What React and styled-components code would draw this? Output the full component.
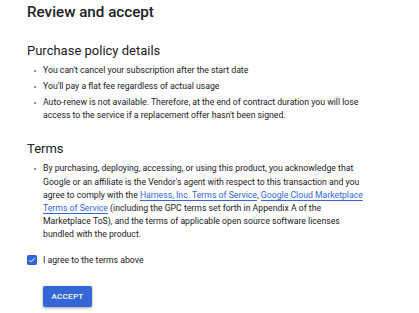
import React from "react";
import styled, { createGlobalStyle } from "styled-components";

const Global = createGlobalStyle`
  html, body { margin: 0; padding: 0; background: #fff; }
  body { font-family: Roboto, "Noto Sans", Arial, sans-serif; color: #202124; }
`;

const Page = styled.div`
  width: 419px;
  height: 313px;
  overflow: hidden;
  box-sizing: border-box;
  padding: 3px 0 0 27px;
`;

const Title = styled.h1`
  margin: 0;
  font-size: 15.2px;
  line-height: 19px;
  font-weight: 500;
`;

const SectionTitle = styled.h2`
  margin: ${(p) => p.$top}px 0 0;
  font-size: 13px;
  line-height: 18px;
  font-weight: 400;
`;

const List = styled.ul`
  margin: ${(p) => p.$top}px 0 0;
  padding: 0 0 0 16px;
  width: 326px;
  font-size: 8.7px;
  line-height: 13.2px;
  list-style: none;
`;

const Item = styled.li`
  position: relative;
  margin-bottom: 2.8px;
  &::before {
    content: "";
    position: absolute;
    left: -9px;
    top: 5.5px;
    width: 2.4px;
    height: 2.4px;
    border-radius: 50%;
    background: #5f6368;
  }
`;

const Link = styled.a`
  color: #3367d6;
  text-decoration: underline;
  text-decoration-thickness: 1px;
  text-underline-offset: 2px;
`;

const CheckRow = styled.label`
  display: flex;
  align-items: center;
  gap: 6px;
  margin-top: 12px;
  font-size: 8.7px;
  line-height: 13px;
`;

const Box = styled.span`
  width: 10px;
  height: 10px;
  border-radius: 1.5px;
  background: #3367d6;
  display: flex;
  align-items: center;
  justify-content: center;
`;

const Button = styled.button`
  margin: 19px 0 0 16px;
  width: 49px;
  height: 21px;
  border: none;
  border-radius: 2px;
  background: #3367d6;
  color: #fff;
  font-family: Roboto, Arial, sans-serif;
  font-size: 8px;
  font-weight: 500;
  letter-spacing: 0.3px;
  padding: 0;
  box-shadow: 0 1px 2px rgba(60, 64, 67, 0.3), 0 1px 3px 1px rgba(60, 64, 67, 0.15);
`;

export default function App() {
  return (
    <Page>
      <Global />
      <Title>Review and accept</Title>
      <SectionTitle $top={20}>Purchase policy details</SectionTitle>
      <List $top={4}>
        <Item>You can't cancel your subscription after the start date</Item>
        <Item>You'll pay a flat fee regardless of actual usage</Item>
        <Item>
          Auto-renew is not available. Therefore, at the end of contract duration you will lose
          access to the service if a replacement offer hasn't been signed.
        </Item>
      </List>
      <SectionTitle $top={18}>Terms</SectionTitle>
      <List $top={4}>
        <Item>
          By purchasing, deploying, accessing, or using this product, you acknowledge that Google
          or an affiliate is the Vendor's agent with respect to this transaction and you agree to
          comply with the <Link href="#">Harness, Inc. Terms of Service</Link>,{" "}
          <Link href="#">Google Cloud Marketplace Terms of Service</Link> (including the GPC terms
          set forth in Appendix A of the Marketplace ToS), and the terms of applicable open source
          software licenses bundled with the product.
        </Item>
      </List>
      <CheckRow>
        <Box>
          <svg width="8" height="8" viewBox="0 0 24 24">
            <path d="M4 12.5l5 5L20 6.5" fill="none" stroke="#fff" strokeWidth="3" />
          </svg>
        </Box>
        I agree to the terms above
      </CheckRow>
      <Button>ACCEPT</Button>
    </Page>
  );
}
